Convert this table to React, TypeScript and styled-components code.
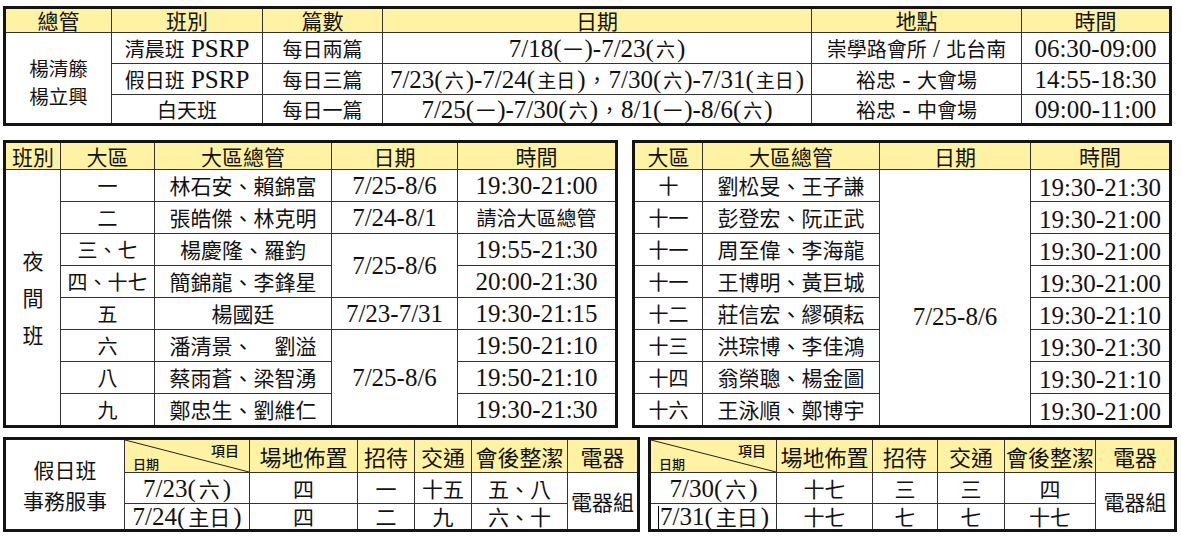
import React from 'react';
import styled, { createGlobalStyle } from 'styled-components';

const GlobalStyle = createGlobalStyle`
  html, body { margin: 0; padding: 0; background: #fff; }
  * { box-sizing: border-box; }
`;

const Page = styled.div`
  width: 1181px;
  height: 538px;
  padding: 6px 0 0 3px;
  display: flex;
  flex-direction: column;
  font-family: "Liberation Serif", "Times New Roman", serif;
  color: #111;
  overflow: hidden;
`;

const Band = styled.div<{ $gap: number; $top: number }>`
  display: flex;
  align-items: flex-start;
  gap: ${p => p.$gap}px;
  margin-top: ${p => p.$top}px;
`;

const Frame = styled.div<{ $w: number }>`
  width: ${p => p.$w}px;
  border: 3px solid #141414;
  overflow: hidden;
`;

const Grid = styled.table`
  width: calc(100% + 1px);
  margin-bottom: -1px;
  border-collapse: separate;
  border-spacing: 0;
  table-layout: fixed;
`;

const Tr = styled.tr<{ $h: number }>`
  height: ${p => p.$h}px;
`;

const Han = styled.span`
  font-family: "Noto Sans CJK TC", "Noto Sans CJK SC", sans-serif;
`;

const Head = styled.td<{ $size?: number }>`
  background: #fff2a3;
  font-family: "Noto Sans CJK TC", "Noto Sans CJK SC", sans-serif;
  font-size: ${p => p.$size ?? 21}px;
  line-height: 1;
  text-align: center;
  vertical-align: middle;
  padding: 0;
  border-right: 1px solid #333;
  border-bottom: 1px solid #333;
  white-space: nowrap;
`;

const Cell = styled.td<{ $han?: number; $pad?: number; $low?: boolean; $shift?: number }>`
  font-size: 25px;
  line-height: 1;
  text-align: center;
  vertical-align: ${p => (p.$low ? 'bottom' : 'middle')};
  padding: ${p => p.$shift ?? 0}px 0 ${p => (p.$low ? 1 : 0)}px;
  border-right: 1px solid #333;
  border-bottom: 1px solid #333;
  white-space: nowrap;

  ${Han} {
    font-size: ${p => p.$han ?? 21}px;
    padding: 0 ${p => p.$pad ?? 0}px;
  }
`;

const Lines = styled.span<{ $lh: number }>`
  display: block;
  line-height: ${p => p.$lh}px;
`;

const DiagCell = styled(Head)`
  position: relative;
`;

const DiagLine = styled.svg`
  position: absolute;
  inset: 0;
  width: 100%;
  height: 100%;
`;

const DiagBox = styled.div`
  height: 32px;
  display: flex;
  flex-direction: column;
  justify-content: space-between;
  padding: 3px 10px 2px 8px;
  font-size: 13px;
  font-weight: 500;
  line-height: 1;
`;

const DiagTop = styled.span`
  align-self: flex-end;
  font-size: 14px;
`;

const DiagBottom = styled.span`
  align-self: flex-start;
`;

const Caret = styled.span`
  display: inline-block;
  width: 1px;
  height: 23px;
  background: #000;
  margin-right: 1px;
  vertical-align: -4px;
`;

const HAN = /([\u2E80-\u9FFF\uF900-\uFAFF\uFF00-\uFFEF\u3000-\u303F]+)/;

const Txt = ({ s }: { s: string }) => (
  <>
    {s.split(HAN).map((part, i) =>
      part === '' ? null : i % 2 ? <Han key={i}>{part}</Han> : <React.Fragment key={i}>{part}</React.Fragment>
    )}
  </>
);

// measured widths from outer edge to next line; trim the frame borders off first/last
const Cols = ({ w }: { w: number[] }) => (
  <colgroup>
    {w.map((x, i) => (
      <col key={i} style={{ width: x - (i === 0 ? 3 : 0) - (i === w.length - 1 ? 2 : 0) }} />
    ))}
  </colgroup>
);

const topRows = [
  { cls: '清晨班 PSRP', count: '每日兩篇', date: '7/18(一)-7/23(六)', place: '崇學路會所 / 北台南', time: '06:30-09:00', h: 31 },
  { cls: '假日班 PSRP', count: '每日三篇', date: '7/23(六)-7/24(主日)，7/30(六)-7/31(主日)', place: '裕忠 - 大會場', time: '14:55-18:30', h: 31 },
  { cls: '白天班', count: '每日一篇', date: '7/25(一)-7/30(六)，8/1(一)-8/6(六)', place: '裕忠 - 中會場', time: '09:00-11:00', h: 29 },
];

const nightLeft: { zone: string; lead: string; date?: string; span?: number; time: string }[] = [
  { zone: '一', lead: '林石安、賴錦富', date: '7/25-8/6', time: '19:30-21:00' },
  { zone: '二', lead: '張皓傑、林克明', date: '7/24-8/1', time: '請洽大區總管' },
  { zone: '三、七', lead: '楊慶隆、羅鈞', date: '7/25-8/6', span: 2, time: '19:55-21:30' },
  { zone: '四、十七', lead: '簡錦龍、李鋒星', time: '20:00-21:30' },
  { zone: '五', lead: '楊國廷', date: '7/23-7/31', time: '19:30-21:15' },
  { zone: '六', lead: '潘清景、　劉溢', date: '7/25-8/6', span: 3, time: '19:50-21:10' },
  { zone: '八', lead: '蔡雨蒼、梁智湧', time: '19:50-21:10' },
  { zone: '九', lead: '鄭忠生、劉維仁', time: '19:30-21:30' },
];

const nightRight = [
  { zone: '十', lead: '劉松旻、王子謙', time: '19:30-21:30' },
  { zone: '十一', lead: '彭登宏、阮正武', time: '19:30-21:00' },
  { zone: '十一', lead: '周至偉、李海龍', time: '19:30-21:00' },
  { zone: '十一', lead: '王博明、黃巨城', time: '19:30-21:00' },
  { zone: '十二', lead: '莊信宏、繆碩耘', time: '19:30-21:10' },
  { zone: '十三', lead: '洪琮博、李佳鴻', time: '19:30-21:30' },
  { zone: '十四', lead: '翁榮聰、楊金圖', time: '19:30-21:10' },
  { zone: '十六', lead: '王泳順、鄭博宇', time: '19:30-21:00' },
];

const dutyHeads = ['場地佈置', '招待', '交通', '會後整潔', '電器'];

const dutyLeft = [
  { date: '7/23(六)', jobs: ['四', '一', '十五', '五、八'] },
  { date: '7/24(主日)', jobs: ['四', '二', '九', '六、十'] },
];

const dutyRight = [
  { date: '7/30(六)', jobs: ['十七', '三', '三', '四'] },
  { date: '7/31(主日)', jobs: ['十七', '七', '七', '十七'], caret: true },
];

const DiagHead = () => (
  <DiagCell>
    <DiagLine viewBox="0 0 100 100" preserveAspectRatio="none">
      <line x1="0" y1="0" x2="100" y2="100" stroke="#222" strokeWidth="1" vectorEffect="non-scaling-stroke" />
    </DiagLine>
    <DiagBox>
      <DiagTop>項目</DiagTop>
      <DiagBottom>日期</DiagBottom>
    </DiagBox>
  </DiagCell>
);

type Duty = { date: string; jobs: string[]; caret?: boolean };

const DutyTable = ({ w, cols, rows, label }: { w: number; cols: number[]; rows: Duty[]; label?: boolean }) => (
  <Frame $w={w}>
    <Grid>
      <Cols w={cols} />
      <tbody>
        <Tr $h={33}>
          {label && (
            <Cell rowSpan={3} $han={21}>
              <Lines $lh={31}>
                <Han>假日班</Han>
                <br />
                <Han>事務服事</Han>
              </Lines>
            </Cell>
          )}
          <DiagHead />
          {dutyHeads.map(h => (
            <Head key={h} $size={22}>{h}</Head>
          ))}
        </Tr>
        {rows.map((r, i) => (
          <Tr key={r.date} $h={i === 0 ? 31 : 26}>
            <Cell $pad={3}>
              {r.caret && <Caret />}
              <Txt s={r.date} />
            </Cell>
            {r.jobs.map((j, k) => (
              <Cell key={k}>
                <Txt s={j} />
              </Cell>
            ))}
            {i === 0 && (
              <Cell rowSpan={2}>
                <Txt s="電器組" />
              </Cell>
            )}
          </Tr>
        ))}
      </tbody>
    </Grid>
  </Frame>
);

export default function App() {
  return (
    <>
      <GlobalStyle />
      <Page>
        <Frame $w={1169}>
          <Grid>
            <Cols w={[109, 151, 120, 429, 210, 150]} />
            <tbody>
              <Tr $h={24}>
                {['總管', '班別', '篇數', '日期', '地點', '時間'].map(h => (
                  <Head key={h}>{h}</Head>
                ))}
              </Tr>
              {topRows.map((r, i) => (
                <Tr key={r.cls} $h={r.h}>
                  {i === 0 && (
                    <Cell rowSpan={3} $shift={8} $han={19.5}>
                      <Lines $lh={28.5}>
                        <Han>楊清籐</Han>
                        <br />
                        <Han>楊立興</Han>
                      </Lines>
                    </Cell>
                  )}
                  <Cell $han={20}>
                    <Txt s={r.cls} />
                  </Cell>
                  <Cell $han={20}>
                    <Txt s={r.count} />
                  </Cell>
                  <Cell $han={19} $pad={2}>
                    <Txt s={r.date} />
                  </Cell>
                  <Cell $han={20}>
                    <Txt s={r.place} />
                  </Cell>
                  <Cell>
                    <Txt s={r.time} />
                  </Cell>
                </Tr>
              ))}
            </tbody>
          </Grid>
        </Frame>

        <Band $gap={14} $top={14}>
          <Frame $w={615}>
            <Grid>
              <Cols w={[58, 94, 177, 126, 160]} />
              <tbody>
                <Tr $h={27}>
                  {['班別', '大區', '大區總管', '日期', '時間'].map(h => (
                    <Head key={h}>{h}</Head>
                  ))}
                </Tr>
                {nightLeft.map((r, i) => (
                  <Tr key={i} $h={32}>
                    {i === 0 && (
                      <Cell rowSpan={8}>
                        <Lines $lh={36}>
                          <Han>夜</Han>
                          <br />
                          <Han>間</Han>
                          <br />
                          <Han>班</Han>
                        </Lines>
                      </Cell>
                    )}
                    <Cell $han={20}>
                      <Txt s={r.zone} />
                    </Cell>
                    <Cell>
                      <Txt s={r.lead} />
                    </Cell>
                    {r.date && (
                      <Cell rowSpan={r.span ?? 1}>
                        <Txt s={r.date} />
                      </Cell>
                    )}
                    <Cell $han={20}>
                      <Txt s={r.time} />
                    </Cell>
                  </Tr>
                ))}
              </tbody>
            </Grid>
          </Frame>

          <Frame $w={540}>
            <Grid>
              <Cols w={[71, 177, 151, 141]} />
              <tbody>
                <Tr $h={27}>
                  {['大區', '大區總管', '日期', '時間'].map(h => (
                    <Head key={h}>{h}</Head>
                  ))}
                </Tr>
                {nightRight.map((r, i) => (
                  <Tr key={i} $h={32}>
                    <Cell $han={20}>
                      <Txt s={r.zone} />
                    </Cell>
                    <Cell>
                      <Txt s={r.lead} />
                    </Cell>
                    {i === 0 && (
                      <Cell rowSpan={8} $shift={38}>
                        <Txt s="7/25-8/6" />
                      </Cell>
                    )}
                    <Cell $low>
                      <Txt s={r.time} />
                    </Cell>
                  </Tr>
                ))}
              </tbody>
            </Grid>
          </Frame>
        </Band>

        <Band $gap={8} $top={9}>
          <DutyTable w={637} cols={[122, 125, 108, 57, 57, 96, 72]} rows={dutyLeft} label />
          <DutyTable w={529} cols={[129, 96, 65, 67, 91, 81]} rows={dutyRight} />
        </Band>
      </Page>
    </>
  );
}
